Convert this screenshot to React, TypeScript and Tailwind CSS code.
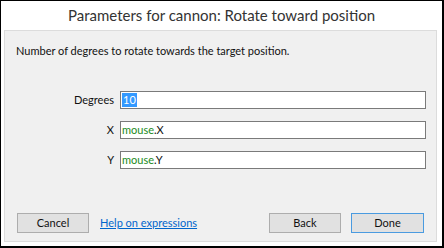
export default function App() {
  const font = { fontFamily: 'Lato, "Noto Sans", sans-serif' };
  return (
    <div
      className="w-[444px] h-[248px] bg-white border-l border-t border-black border-r-2 border-b-2 flex flex-col text-[#111]"
      style={font}
    >
      {/* Title */}
      <div className="h-[29px] flex items-center justify-center text-[15px] text-[#333] pb-px">
        Parameters for cannon: Rotate toward position
      </div>

      {/* Panel */}
      <div className="ml-[3px] mr-[5px] h-[212px] bg-[#f0f0f0] border border-[#dcdcdc] flex flex-col text-[11px]">
        <div className="mt-[12px] ml-[11px] leading-[16px]">
          Number of degrees to rotate towards the target position.
        </div>

        <div className="mt-[32px] flex flex-col gap-[12px]">
          <Row label="Degrees">
            <span className="inline-block h-[14px] leading-[14px] bg-[#3399ff] text-white px-px">10</span>
          </Row>
          <Row label="X">
            <span className="text-[#218a21]">mouse</span>
            <span>.X</span>
          </Row>
          <Row label="Y">
            <span className="text-[#218a21]">mouse</span>
            <span>.Y</span>
          </Row>
        </div>

        {/* Buttons */}
        <div className="mt-auto mb-[8px] ml-[12px] mr-[12px] flex items-center">
          <button className="w-[72px] h-[20px] bg-[#e1e1e1] border border-[#adadad] flex items-center justify-center">
            Cancel
          </button>
          <a className="ml-[11px] text-[#0066cc] underline">Help on expressions</a>
          <div className="flex-1" />
          <button className="w-[72px] h-[20px] bg-[#e1e1e1] border border-[#adadad] flex items-center justify-center">
            Back
          </button>
          <button className="ml-[10px] w-[73px] h-[20px] bg-[#e1e1e1] border border-[#4a9be0] flex items-center justify-center">
            Done
          </button>
        </div>
      </div>
    </div>
  );
}

function Row({ label, children }: { label: string; children: React.ReactNode }) {
  return (
    <div className="flex items-center">
      <div className="w-[115px] text-right pr-[6px]">{label}</div>
      <div className="w-[306px] h-[18px] bg-white border border-[#7a7a7a] flex items-center pl-px leading-[14px]">
        {children}
      </div>
    </div>
  );
}
